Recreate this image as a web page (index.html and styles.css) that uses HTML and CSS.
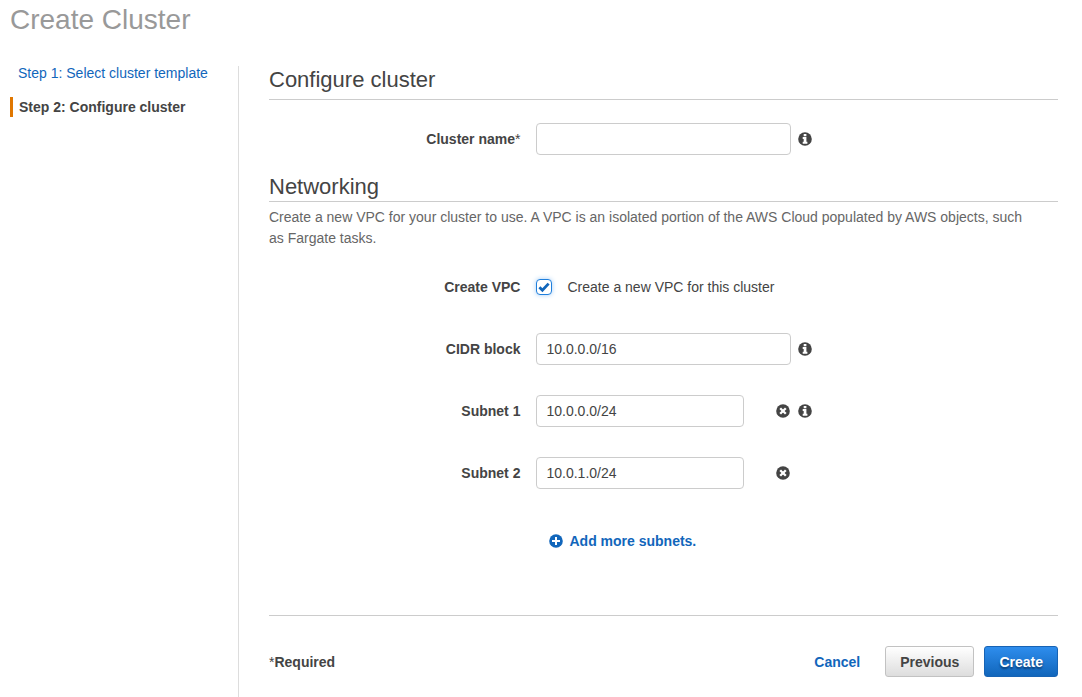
FILE: index.html
```html
<!DOCTYPE html>
<html lang="en">
<head>
<meta charset="utf-8">
<meta name="viewport" content="width=device-width, initial-scale=1">
<title>Create Cluster</title>
<link rel="stylesheet" href="styles.css">
</head>
<body>
<svg class="sprite" aria-hidden="true">
  <symbol id="info" viewBox="0 0 14 14"><circle cx="7" cy="7" r="6.8" fill="currentColor"/><path fill="#fff" d="M5.7 2h2.7v2.3H5.7zM4.7 5.1h3.7v4.7h1v2H4.7v-2h1V7.1h-1z"/></symbol>
  <symbol id="remove" viewBox="0 0 14 14"><circle cx="7" cy="7" r="6.8" fill="currentColor"/><path stroke="#fff" stroke-width="2.3" d="M4.2 4.2l5.6 5.6M9.8 4.2L4.2 9.8"/></symbol>
  <symbol id="add" viewBox="0 0 14 14"><circle cx="7" cy="7" r="6.8" fill="currentColor"/><path stroke="#fff" stroke-width="2" d="M7 3v8M3 7h8"/></symbol>
</svg>
<div class="page">
  <header class="page-header"><h1>Create Cluster</h1></header>
  <div class="columns">
    <nav class="steps" aria-label="Steps">
      <a class="step" href="#">Step 1: Select cluster template</a>
      <span class="step step-current" aria-current="step">Step 2: Configure cluster</span>
    </nav>
    <main class="content">
      <form>
        <h2 class="heading heading-main">Configure cluster</h2>
        <div class="row">
          <label class="label" for="name">Cluster name<span class="star">*</span></label>
          <div class="control">
            <input class="field" id="name" type="text">
            <button class="icon-button" type="button" aria-label="Info"><svg class="icon"><use href="#info"/></svg></button>
          </div>
        </div>
        <h2 class="heading heading-sub">Networking</h2>
        <p class="intro">Create a new VPC for your cluster to use. A VPC is an isolated portion of the AWS Cloud populated by AWS objects, such as Fargate tasks.</p>
        <div class="rows">
          <div class="row">
            <span class="label">Create VPC</span>
            <div class="control">
              <label class="check-label"><span class="check"><input class="check-box" type="checkbox" checked><svg class="check-mark" viewBox="0 0 12 12" aria-hidden="true"><path d="M1.4 6.2l3 3L10.6 2.6" fill="none" stroke="currentColor" stroke-width="2.8"/></svg></span>Create a new VPC for this cluster</label>
            </div>
          </div>
          <div class="row">
            <label class="label" for="cidr">CIDR block</label>
            <div class="control">
              <input class="field" id="cidr" type="text" value="10.0.0.0/16">
              <button class="icon-button" type="button" aria-label="Info"><svg class="icon"><use href="#info"/></svg></button>
            </div>
          </div>
          <div class="row">
            <label class="label" for="subnet1">Subnet 1</label>
            <div class="control">
              <input class="field field-short" id="subnet1" type="text" value="10.0.0.0/24">
              <button class="icon-button remove" type="button" aria-label="Remove subnet 1"><svg class="icon"><use href="#remove"/></svg></button>
              <button class="icon-button" type="button" aria-label="Info"><svg class="icon"><use href="#info"/></svg></button>
            </div>
          </div>
          <div class="row">
            <label class="label" for="subnet2">Subnet 2</label>
            <div class="control">
              <input class="field field-short" id="subnet2" type="text" value="10.0.1.0/24">
              <button class="icon-button remove" type="button" aria-label="Remove subnet 2"><svg class="icon"><use href="#remove"/></svg></button>
            </div>
          </div>
          <div class="row row-add">
            <span></span>
            <div class="control">
              <button class="add-button" type="button"><svg class="icon" aria-hidden="true"><use href="#add"/></svg>Add more subnets.</button>
            </div>
          </div>
        </div>
        <footer class="footer">
          <p class="required"><span class="star">*</span>Required</p>
          <a class="cancel" href="#">Cancel</a>
          <button class="button" type="button">Previous</button>
          <button class="button button-primary" type="submit">Create</button>
        </footer>
      </form>
    </main>
  </div>
</div>
</body>
</html>
```
FILE: styles.css
```css
* { box-sizing: border-box; }

body {
  margin: 0;
  background: #fff;
  color: #444;
  font: 14px/20px "Liberation Sans", Arial, sans-serif;
}

h1, h2, p { margin: 0; font-weight: normal; }
a { color: #1166bb; text-decoration: none; }
button, input { font: inherit; color: inherit; }
button { cursor: pointer; }

.sprite { display: none; }

.page { min-height: 100vh; display: flex; flex-direction: column; }

.page-header { padding: 0 10px 26px; }
.page-header h1 { color: #999; font-size: 28px; line-height: 40px; }

.columns { flex: 1; display: flex; }

.steps {
  width: 239px;
  flex: none;
  display: flex;
  flex-direction: column;
  gap: 14px;
  padding: 0 10px;
  border-right: 1px solid #ddd;
}
.step { padding-left: 8px; line-height: 16px; margin: -1px 0 3px; }
.step-current {
  padding-left: 6px;
  border-left: 3px solid #e07700;
  font-weight: bold;
  line-height: 20px;
}

.content { flex: 1; min-width: 0; padding: 0 24px 20px 30px; }

.heading { font-size: 22px; line-height: 26px; border-bottom: 1px solid #ccc; }
.heading-main { padding: 1px 0 6px; margin-bottom: 23px; }
.heading-sub { padding-bottom: 1px; margin-top: 19px; }
.intro { margin-top: 5px; padding-right: 20px; color: #666; line-height: 21px; }

.rows { display: flex; flex-direction: column; gap: 30px; margin-top: 22px; }
.row {
  display: grid;
  grid-template-columns: 32% 1fr;
  column-gap: 15px;
  align-items: center;
  min-height: 32px;
}
.row-add { margin-top: 6px; }
.label { padding-right: 1px; text-align: right; font-weight: bold; }
.star { font-weight: normal; }
.control { display: flex; align-items: center; gap: 8px; }

.field {
  width: 255px;
  height: 32px;
  padding: 0 9px;
  border: 1px solid #ccc;
  border-radius: 4px;
  background: #fff;
}
.field-short { width: 208px; }

.icon { width: 14px; height: 14px; display: block; }
.icon-button { padding: 0; border: 0; background: none; }
.field + .icon-button { margin-left: -1px; }
.field + .remove { margin-left: 24px; }

.check-label { display: flex; align-items: center; gap: 15px; }
.check { display: grid; }
.check > * { grid-area: 1 / 1; place-self: center; }
.check-box {
  appearance: none;
  width: 16px;
  height: 16px;
  margin: 0;
  border: 1px solid #1f7fdc;
  border-radius: 4px;
  background: #fff;
  box-shadow: 0 0 5px #a5cdf5;
}
.check-mark { width: 12px; height: 12px; color: #1166bb; visibility: hidden; pointer-events: none; }
.check-box:checked + .check-mark { visibility: visible; }

.add-button {
  display: flex;
  align-items: center;
  gap: 6px;
  margin-left: 13px;
  padding: 6px 0;
  border: 0;
  background: none;
  color: #1166bb;
  font-weight: bold;
}

.footer {
  display: flex;
  align-items: center;
  gap: 10px;
  margin-top: 58px;
  padding-top: 30px;
  border-top: 1px solid #ccc;
  font-weight: bold;
}
.required { flex: 1; font-weight: bold; }
.cancel { margin-right: 15px; }
.button {
  padding: 0 14px;
  height: 31px;
  border: 1px solid #c2c2c2;
  border-radius: 3px;
  background: linear-gradient(#fff, #ddd);
  font-weight: bold;
}
.button-primary {
  border-color: #1763b4;
  background: linear-gradient(#2e8ded, #1166bb);
  color: #fff;
  text-shadow: 0 2px 2px #0a3a70;
}
```
